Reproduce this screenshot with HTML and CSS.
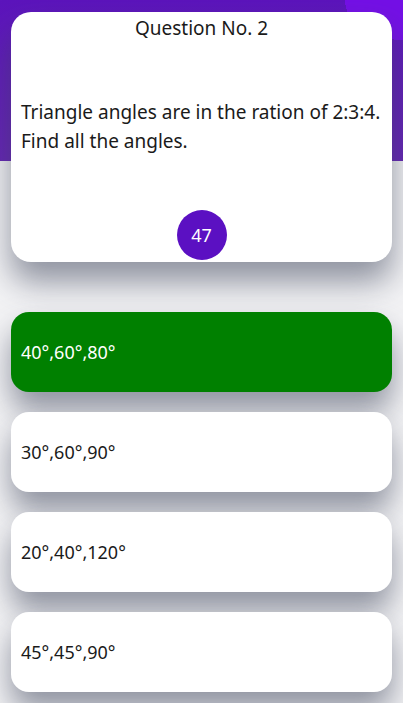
FILE: index.html
```html
<!DOCTYPE html>
<html>
<head>
<meta charset="utf-8">
<link rel="stylesheet" href="styles.css">
</head>
<body>
<div class="page">
  <div class="question-card">
    <div class="q-title">Question No. 2</div>
    <div class="q-text">Triangle angles are in the ration of 2:3:4. Find all the angles.</div>
    <div class="timer">47</div>
  </div>
  <div class="options">
    <div class="option correct">40°,60°,80°</div>
    <div class="option">30°,60°,90°</div>
    <div class="option">20°,40°,120°</div>
    <div class="option">45°,45°,90°</div>
  </div>
</div>
</body>
</html>
```
FILE: styles.css
```css
html, body {
  margin: 0;
  padding: 0;
}
body {
  width: 403px;
  height: 703px;
  overflow: hidden;
  font-family: "Noto Sans", "Open Sans", sans-serif;
  color: #1a1a1a;
  background-color: #f3f3f5;
  background-image:
    radial-gradient(ellipse 58px 40px at 403px 0px, #7410e6 0 100%, transparent 100%),
    linear-gradient(180deg, #5c14bc 0%, #6424b4 100%);
  background-size: 403px 161px, 403px 161px;
  background-repeat: no-repeat;
}
.page {
  padding: 12px 11px 0;
}
.question-card {
  background: #fff;
  border-radius: 20px;
  height: 250px;
  box-sizing: border-box;
  display: flex;
  flex-direction: column;
  align-items: stretch;
  box-shadow: 0 20px 32px rgba(60, 68, 90, 0.55);
}
.q-title {
  text-align: center;
  font-size: 19px;
  line-height: 24px;
  padding-top: 4px;
}
.q-text {
  font-size: 19px;
  line-height: 29px;
  padding: 0 10px;
  margin-top: 58px;
}
.timer {
  margin: auto auto 2px;
  width: 50px;
  height: 50px;
  border-radius: 50%;
  background: #5b10c2;
  color: #fff;
  font-size: 18px;
  display: flex;
  align-items: center;
  justify-content: center;
}
.options {
  margin-top: 50px;
  display: flex;
  flex-direction: column;
  gap: 20px;
}
.option {
  height: 80px;
  border-radius: 18px;
  background: #fff;
  display: flex;
  align-items: center;
  padding: 0 10px;
  font-size: 18px;
  box-shadow: 0 18px 30px rgba(60, 68, 90, 0.55);
}
.option.correct {
  background: #008000;
  color: #fff;
}
```
